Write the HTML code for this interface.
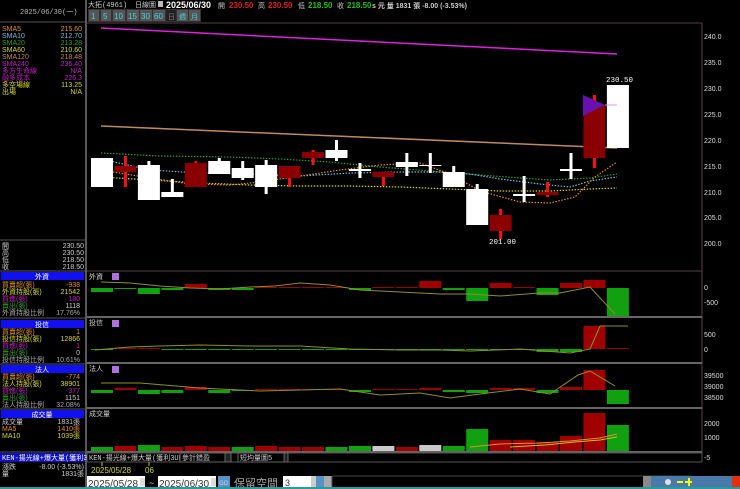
<!DOCTYPE html>
<html><head><meta charset="utf-8"><style>
html,body{margin:0;padding:0;background:#000;width:740px;height:489px;overflow:hidden}
svg{display:block}
text{font-family:"Liberation Sans","Noto Sans CJK TC",sans-serif;font-size:7px}
.m{font-family:"Liberation Mono","Noto Sans CJK TC",monospace;font-size:7px}
</style></head><body>
<svg id="s" width="740" height="489" viewBox="0 0 740 489" xmlns="http://www.w3.org/2000/svg">
<rect width="740" height="489" fill="#000"/>
<!-- left panel separator -->
<rect x="85" y="0" width="2" height="489" fill="#5a5a5a"/>
<text x="20" y="14" fill="#bbb" class="m">2025/06/30(一)</text>
<line x1="0" y1="22" x2="85" y2="22" stroke="#555"/>
<g class="m">
<text x="2" y="31" fill="#e0902a">SMA5</text><text x="82" y="31" fill="#e0902a" text-anchor="end">215.60</text>
<text x="2" y="38" fill="#7ab8e0">SMA10</text><text x="82" y="38" fill="#7ab8e0" text-anchor="end">212.70</text>
<text x="2" y="45" fill="#2aa02a">SMA20</text><text x="82" y="45" fill="#2aa02a" text-anchor="end">213.28</text>
<text x="2" y="52" fill="#d8d820">SMA60</text><text x="82" y="52" fill="#d8d820" text-anchor="end">210.60</text>
<text x="2" y="59" fill="#c08a60">SMA120</text><text x="82" y="59" fill="#c08a60" text-anchor="end">218.48</text>
<text x="2" y="66" fill="#c020c0">SMA240</text><text x="82" y="66" fill="#c020c0" text-anchor="end">236.40</text>
<text x="2" y="73" fill="#c020c0">多方生命線</text><text x="82" y="73" fill="#c020c0" text-anchor="end">N/A</text>
<text x="2" y="80" fill="#c020c0">融多成本</text><text x="82" y="80" fill="#c020c0" text-anchor="end">226.3</text>
<text x="2" y="87" fill="#d8d820">多空場線</text><text x="82" y="87" fill="#d8d820" text-anchor="end">113.25</text>
<text x="2" y="94" fill="#d8d820">出場</text><text x="82" y="94" fill="#d8d820" text-anchor="end">N/A</text>
<text x="2" y="248" fill="#ccc">開</text><text x="84" y="248" fill="#ccc" text-anchor="end">230.50</text>
<text x="2" y="255" fill="#ccc">高</text><text x="84" y="255" fill="#ccc" text-anchor="end">230.50</text>
<text x="2" y="262" fill="#ccc">低</text><text x="84" y="262" fill="#ccc" text-anchor="end">218.50</text>
<text x="2" y="269" fill="#ccc">收</text><text x="84" y="269" fill="#ccc" text-anchor="end">218.50</text>
</g>
<line x1="0" y1="240" x2="85" y2="240" stroke="#555"/>
<line x1="0" y1="271" x2="85" y2="271" stroke="#555"/>
<!-- 外資 -->
<rect x="1" y="272" width="83" height="8" fill="#1010f0"/><text x="42" y="279" fill="#fff" text-anchor="middle">外資</text>
<g class="m">
<text x="2" y="287" fill="#e0902a">買賣超(張)</text><text x="80" y="287" fill="#e0902a" text-anchor="end">-938</text>
<text x="2" y="294" fill="#d8d820">外資持股(張)</text><text x="80" y="294" fill="#d8d820" text-anchor="end">21542</text>
<text x="2" y="301" fill="#c020c0">買進(張)</text><text x="80" y="301" fill="#c020c0" text-anchor="end">180</text>
<text x="2" y="308" fill="#2aa02a">賣出(張)</text><text x="80" y="308" fill="#ccc" text-anchor="end">1118</text>
<text x="2" y="315" fill="#aaa">外資持股比例</text><text x="80" y="315" fill="#aaa" text-anchor="end">17.76%</text>
</g>
<line x1="0" y1="318" x2="85" y2="318" stroke="#555"/>
<rect x="1" y="320" width="83" height="8" fill="#1010f0"/><text x="42" y="327" fill="#fff" text-anchor="middle">投信</text>
<g class="m">
<text x="2" y="334" fill="#e0902a">買賣超(張)</text><text x="80" y="334" fill="#e0902a" text-anchor="end">1</text>
<text x="2" y="341" fill="#d8d820">投信持股(張)</text><text x="80" y="341" fill="#d8d820" text-anchor="end">12866</text>
<text x="2" y="348" fill="#c020c0">買進(張)</text><text x="80" y="348" fill="#c020c0" text-anchor="end">1</text>
<text x="2" y="355" fill="#2aa02a">賣出(張)</text><text x="80" y="355" fill="#ccc" text-anchor="end">0</text>
<text x="2" y="362" fill="#aaa">投信持股比例</text><text x="80" y="362" fill="#aaa" text-anchor="end">10.61%</text>
</g>
<line x1="0" y1="364" x2="85" y2="364" stroke="#555"/>
<rect x="1" y="365" width="83" height="8" fill="#1010f0"/><text x="42" y="372" fill="#fff" text-anchor="middle">法人</text>
<g class="m">
<text x="2" y="379" fill="#e0902a">買賣超(張)</text><text x="80" y="379" fill="#e0902a" text-anchor="end">-774</text>
<text x="2" y="386" fill="#d8d820">法人持股(張)</text><text x="80" y="386" fill="#d8d820" text-anchor="end">38901</text>
<text x="2" y="393" fill="#c020c0">買進(張)</text><text x="80" y="393" fill="#c020c0" text-anchor="end">377</text>
<text x="2" y="400" fill="#2aa02a">賣出(張)</text><text x="80" y="400" fill="#ccc" text-anchor="end">1151</text>
<text x="2" y="407" fill="#aaa">法人持股比例</text><text x="80" y="407" fill="#aaa" text-anchor="end">32.08%</text>
</g>
<line x1="0" y1="409" x2="85" y2="409" stroke="#555"/>
<rect x="1" y="410" width="83" height="8" fill="#1010f0"/><text x="42" y="417" fill="#fff" text-anchor="middle">成交量</text>
<g class="m">
<text x="2" y="424" fill="#ccc">成交量</text><text x="80" y="424" fill="#ccc" text-anchor="end">1831張</text>
<text x="2" y="431" fill="#e0902a">MA5</text><text x="80" y="431" fill="#e0902a" text-anchor="end">1410張</text>
<text x="2" y="438" fill="#d8d820">MA10</text><text x="80" y="438" fill="#d8d820" text-anchor="end">1039張</text>
</g>
<line x1="0" y1="452" x2="85" y2="452" stroke="#555"/>
<rect x="0" y="453" width="85" height="9" fill="#1010c0"/><text x="2" y="460" fill="#fff" class="m">KEN-揚光線+爆大量(獲利3UP)</text>
<g class="m"><text x="2" y="469" fill="#ccc">漲跌</text><text x="84" y="469" fill="#ccc" text-anchor="end">-8.00 (-3.53%)</text>
<text x="2" y="476" fill="#ccc">量</text><text x="84" y="476" fill="#ccc" text-anchor="end">1831張</text></g>

<!-- top bar -->
<text x="88" y="7" fill="#ccc" class="m">大拓(4961)</text>
<text x="135" y="7" fill="#ccc" class="m">日線圖</text>
<rect x="158" y="1" width="5" height="6" fill="#bbb"/>
<text x="166" y="8" fill="#fff" font-weight="bold" style="font-size:9px">2025/06/30</text>
<text x="218" y="8" fill="#ccc" class="m">開</text><text x="229" y="8" fill="#e02020" font-weight="bold" style="font-size:8px">230.50</text>
<text x="258" y="8" fill="#ccc" class="m">高</text><text x="268" y="8" fill="#e02020" font-weight="bold" style="font-size:8px">230.50</text>
<text x="298" y="8" fill="#ccc" class="m">低</text><text x="308" y="8" fill="#20c020" font-weight="bold" style="font-size:8px">218.50</text>
<text x="337" y="8" fill="#ccc" class="m">收</text><text x="347" y="8" fill="#20c020" font-weight="bold" style="font-size:8px">218.50</text>
<text x="372" y="8" fill="#ccc" font-weight="bold" style="font-size:7px">s 元  量 1831 張  -8.00 (-3.53%)</text>
<rect x="88" y="9" width="113" height="13" fill="#333"/>
<g font-size="8" fill="#4ad0e0" style="font-size:8px">
<rect x="89" y="10" width="10" height="11" fill="#555"/><text x="91" y="19" fill="#4ad0e0" style="font-size:8px">1</text>
<rect x="101" y="10" width="10" height="11" fill="#555"/><text x="103" y="19" fill="#4ad0e0" style="font-size:8px">5</text>
<rect x="113" y="10" width="12" height="11" fill="#555"/><text x="114" y="19" fill="#4ad0e0" style="font-size:8px">10</text>
<rect x="127" y="10" width="12" height="11" fill="#555"/><text x="128" y="19" fill="#4ad0e0" style="font-size:8px">15</text>
<rect x="140" y="10" width="12" height="11" fill="#555"/><text x="141" y="19" fill="#4ad0e0" style="font-size:8px">30</text>
<rect x="153" y="10" width="12" height="11" fill="#555"/><text x="154" y="19" fill="#4ad0e0" style="font-size:8px">60</text>
<rect x="166" y="10" width="10" height="11" fill="#222"/><text x="168" y="19" fill="#777">日</text>
<rect x="177" y="10" width="11" height="11" fill="#555"/><text x="179" y="19" fill="#4ad0e0">週</text>
<rect x="189" y="10" width="11" height="11" fill="#555"/><text x="191" y="19" fill="#4ad0e0">月</text>
</g>
<!-- chart frame -->
<line x1="87" y1="23" x2="702" y2="23" stroke="#5a4048"/>
<line x1="702" y1="23" x2="702" y2="462" stroke="#5a4048"/>
<line x1="87" y1="271" x2="702" y2="271" stroke="#5a4048"/>
<g stroke="#666" stroke-width="2"><line x1="87" y1="317" x2="702" y2="317"/><line x1="87" y1="363" x2="702" y2="363"/><line x1="87" y1="408" x2="702" y2="408"/><line x1="87" y1="452" x2="702" y2="452"/></g>
<g fill="#ddd" class="m" style="font-size:7.5px">
<text x="704" y="39">240.0</text><text x="704" y="65">235.0</text><text x="704" y="91">230.0</text><text x="704" y="117">225.0</text><text x="704" y="143">220.0</text><text x="704" y="169">215.0</text><text x="704" y="195">210.0</text><text x="704" y="220">205.0</text><text x="704" y="246">200.0</text>
<text x="704" y="290">0</text><text x="704" y="305">-500</text>
<text x="704" y="337">500</text><text x="704" y="352">0</text>
<text x="704" y="378">39500</text><text x="704" y="389">39000</text><text x="704" y="400">38500</text>
<text x="704" y="426">2000</text><text x="704" y="440">1000</text><text x="704" y="460">-5</text>
</g>
<!-- MA lines -->
<line x1="101" y1="28" x2="617" y2="54" stroke="#e020e0" stroke-width="1.5"/>
<line x1="101" y1="126" x2="617" y2="148" stroke="#c08a60" stroke-width="1.5"/>
<g fill="none" stroke-dasharray="1.5 1.5" stroke-width="1.2">
<polyline stroke="#2aa02a" points="101,153 160,156 230,157 280,159 330,162 380,167 430,171 480,175 520,178 550,180 590,178 617,174"/>
<polyline stroke="#7ab8e0" points="101,159 150,170 200,173 250,174 300,176 350,173 400,172 440,172 470,174 500,179 540,184 570,187 590,181 617,177"/>
<polyline stroke="#d8d820" points="101,177 150,180 200,183 250,185 300,186 350,186 400,187 450,189 500,191 550,191 590,189 617,188"/>
<polyline stroke="#e0902a" points="101,170 150,178 190,184 230,185 260,182 300,176 340,170 380,165 420,163 450,174 480,191 520,202 550,203 575,197 595,177 617,162"/>
</g>
<g id="candles"></g>
<polygon points="583,95 605,105 583,116" fill="#6a10b0"/>
<line x1="605" y1="105" x2="617" y2="105" stroke="#e090e0"/>
<text x="606" y="82" fill="#fff" class="m" style="font-size:7.5px">230.50</text>
<text x="489" y="244" fill="#fff" class="m" style="font-size:7.5px">201.00</text>
<!-- subpanel labels -->
<text x="89" y="279" fill="#ccc" class="m">外資</text><rect x="112" y="273" width="7" height="7" fill="#b070e0"/>
<text x="89" y="325" fill="#ccc" class="m">投信</text><rect x="112" y="320" width="7" height="7" fill="#b070e0"/>
<text x="89" y="371" fill="#ccc" class="m">法人</text><rect x="112" y="366" width="7" height="7" fill="#b070e0"/>
<text x="89" y="416" fill="#ccc" class="m">成交量</text>
<g id="bars"></g>
<g fill="none" stroke="#909020" stroke-width="1">
<polyline points="101,282 130,283 160,286 190,288 220,289 250,287 275,286 300,283 330,285 360,290 400,292 440,294 470,294 500,296 540,293 560,293 590,287 615,314"/>
<polyline points="95,350 130,347 160,346 200,345 250,346 300,346 350,349 400,350 440,350 470,351 520,349 570,353 590,349 600,326 628,326"/>
<polyline points="101,383 140,383 200,388 260,391 300,390 340,389 380,395 420,393 450,398 480,394 520,389 550,394 578,375 590,371 615,386"/>
<polyline stroke="#e0902a" points="470,447 500,444 540,443 570,441 600,438 617,434"/>
<polyline stroke="#c8c020" points="510,447 545,445 575,442 600,440 617,437"/>
</g>
<!-- KEN row -->
<rect x="87" y="453" width="615" height="9" fill="#000" stroke="#555"/>
<text x="89" y="460" fill="#ccc" class="m">KEN-揚光線+爆大量(獲利3UP)</text>
<rect x="180" y="453" width="46" height="9" fill="#000" stroke="#666"/><text x="182" y="460" fill="#ccc" class="m">參計錯盈</text>
<rect x="225" y="453" width="6" height="9" fill="#222" stroke="#666"/>
<rect x="238" y="453" width="46" height="9" fill="#000" stroke="#666"/><text x="240" y="460" fill="#ccc" class="m">短均量圖5</text>
<rect x="284" y="453" width="4" height="9" fill="#222" stroke="#666"/>
<line x1="102" y1="462" x2="102" y2="466" stroke="#c8c020"/><line x1="149" y1="462" x2="149" y2="466" stroke="#c8c020"/>
<text x="91" y="473" fill="#d8d820" style="font-size:8px">2025/05/28</text><text x="145" y="473" fill="#d8d820" style="font-size:8px">06</text>
<!-- bottom controls -->
<rect x="87" y="476" width="58" height="12" fill="#fff"/><text x="88" y="487" fill="#333" style="font-size:10px">2025/05/28</text><rect x="140" y="478" width="5" height="8" fill="#ddd"/>
<text x="149" y="486" fill="#ccc" style="font-size:9px">~</text>
<rect x="158" y="476" width="58" height="12" fill="#fff"/><text x="159" y="487" fill="#333" style="font-size:10px">2025/06/30</text><rect x="211" y="478" width="5" height="8" fill="#ddd"/>
<rect x="218" y="476" width="12" height="12" fill="#5a90c8"/><text x="219" y="485" fill="#cde" style="font-size:6px">GO</text>
<text x="234" y="487" fill="#aaa" style="font-size:11px">保留空間</text>
<rect x="283" y="476" width="28" height="12" fill="#fff"/><text x="285" y="486" fill="#333" style="font-size:9px">3</text>
<rect x="311" y="476" width="8" height="12" fill="#ccc"/>
<rect x="316" y="476" width="8" height="12" fill="#5a90c8"/>
<rect x="324" y="476" width="8" height="12" fill="#aaa"/>
<rect x="332" y="476" width="359" height="12" fill="#000" stroke="#444"/>
<rect x="643" y="476" width="8" height="12" fill="#888"/>
<rect x="651" y="476" width="89" height="12" fill="#4a7aaa"/>
<g fill="#e0e0e0"><circle cx="668" cy="482" r="3"/></g>
<rect x="677" y="481" width="6" height="2" fill="#ff0"/><rect x="685" y="481" width="7" height="2" fill="#ff0"/><rect x="688" y="478" width="2" height="8" fill="#ff0"/>
<rect x="732" y="476" width="8" height="12" fill="#e03010"/>
<rect x="0" y="487" width="740" height="2" fill="#2a9a9a"/>
</svg>
<script>
var NS="http://www.w3.org/2000/svg",X=function(i){return 91+23.45*i};
function R(g,x,y,w,h,f){var r=document.createElementNS(NS,"rect");r.setAttribute("x",x);r.setAttribute("y",y);r.setAttribute("width",w);r.setAttribute("height",Math.max(h,1));r.setAttribute("fill",f);g.appendChild(r);}
var cg=document.getElementById("candles");
// [type, bodyTop, bodyBot, wickTop, wickBot] type: w=white, r=darkred
var C=[["w",158,187,158,187],["r",166,172,156,187],["w",165,200,161,200],["w",192,197,179,197],["r",163,187,161,187],["w",161,174,158,174],["w",168,178,161,180],["w",165,187,160,194],["r",166,178,166,187],["r",152,158,150,165],["w",150,158,140,161],["w",169,171,163,178],["r",172,177,172,186],["w",162,167,153,176],["w",165,166,153,173],["w",172,187,166,187],["w",189,225,184,225],["r",215,231,209,239],["w",194,196,176,202],["r",192,195,182,197],["w",169,171,153,179],["r",105,158,95,168],["w",85,148,85,148]];
C.forEach(function(c,i){var x=X(i),cx=x+11;
 R(cg,cx-1.5,c[3],3,c[4]-c[3],c[0]=="w"?"#fff":"#ff1010");
 R(cg,x,c[1],22,c[2]-c[1],c[0]=="w"?"#fff":"#8a0000");});
var bg=document.getElementById("bars");
function panel(z,vals){vals.forEach(function(v,i){var x=X(i);var col=v>0?"#a00000":"#10a010";if(v==="g")return;
 if(v>0)R(bg,x,z-v,22,v,col);else R(bg,x,z,22,-v,col);});}
panel(288,[-4,-1,-6,-2,4,-2,-2,1,1,1,1,-2,1,1,7,-2,-13,5,1,-7,5,8,-28]);
panel(349,[0,1,1,-1,0,0,0,0,-1,-1,-1,-1,-1,-1,-1,-1,-1,-1,-1,-3,-3,23,1]);
panel(390,[-3,2,-4,-3,3,-3,-1,1,1,1,1,-2,1,1,2,-2,-3,2,2,-3,3,20,-14]);
var V=[[4,"g"],[5,"r"],[6,"g"],[4,"r"],[5,"r"],[4,"r"],[4,"g"],[5,"r"],[4,"r"],[4,"r"],[4,"g"],[5,"g"],[5,"s"],[4,"r"],[6,"s"],[5,"g"],[22,"g"],[11,"r"],[11,"r"],[9,"r"],[15,"r"],[38,"r"],[26,"g"]];
V.forEach(function(v,i){R(bg,X(i),451-v[0],22,v[0],v[1]=="g"?"#10a010":v[1]=="r"?"#a00000":"#c8c8c8");});
</script>
</body></html>
